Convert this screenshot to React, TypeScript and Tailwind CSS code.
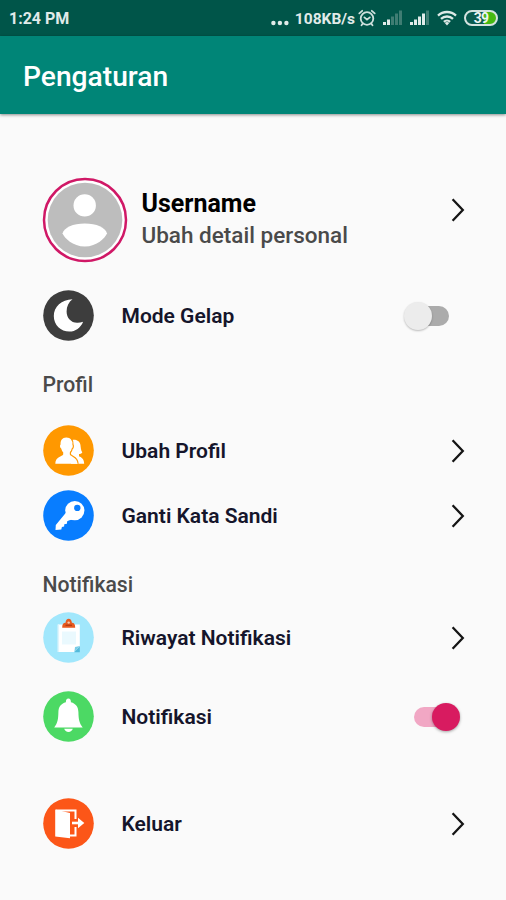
import { useState } from 'react';
import type { ReactNode } from 'react';

function Chevron() {
  return (
    <svg viewBox="0 0 16 26" className="w-4 h-[26px] shrink-0" fill="none" stroke="#151515" strokeWidth="2.3">
      <path d="M2.6 2.2 12.8 13 2.6 23.8" />
    </svg>
  );
}

function AlarmIcon() {
  return (
    <svg viewBox="0 0 18 18" className="w-[18px] h-[18px]" fill="none" stroke="#cfe0dd" strokeWidth="1.8" strokeLinecap="round">
      <circle cx="9" cy="9.5" r="6.3" />
      <path d="M6.4 8.4 9 10.6l2.8-2.2M1.3 4.4 4.2 1.8M16.7 4.4l-2.9-2.6M4.8 14.6l-1.3 1.6M13.2 14.6l1.3 1.6" />
    </svg>
  );
}

function SignalIcon({ level }: { level: number }) {
  return (
    <svg viewBox="0 0 20 16" className="w-5 h-4">
      {[3, 5.5, 8.5, 11.5, 14.5].map((h, i) => (
        <rect key={h} x={i * 4} y={15 - h} width="3" height={h} fill={i < level ? '#e0ebe9' : '#3f7d73'} />
      ))}
    </svg>
  );
}

function WifiIcon() {
  return (
    <svg viewBox="0 0 20 16" className="w-5 h-4" fill="none" stroke="#dce9e6" strokeWidth="2.3">
      <path d="M1 5.6a13 13 0 0 1 18 0M4 8.9a8.7 8.7 0 0 1 12 0M6.9 11.8a4.6 4.6 0 0 1 6.2 0" />
      <path d="M7.8 13 10 15.4 12.2 13a3.2 3.2 0 0 0-4.4 0z" fill="#dce9e6" stroke="none" />
    </svg>
  );
}

function StatusBar() {
  return (
    <div className="h-9 bg-[#005549] flex items-center pl-[9px] pr-2 text-[#e0ebe9] text-[15.5px] font-bold">
      <span className="pt-0.5 text-[16px]">1:24 PM</span>
      <div className="ml-auto flex items-center">
        <svg viewBox="0 0 18 6" className="w-[18px] h-1.5 mt-[9px]" fill="#e0ebe9">
          <circle cx="2.4" cy="3" r="2.2" />
          <circle cx="8.9" cy="3" r="2.2" />
          <circle cx="15.4" cy="3" r="2.2" />
        </svg>
        <span className="ml-[6px] pt-[3px]">108KB/s</span>
        <span className="ml-[3px]"><AlarmIcon /></span>
        <span className="ml-[7px]"><SignalIcon level={2} /></span>
        <span className="ml-[7px]"><SignalIcon level={4} /></span>
        <span className="ml-[7px]"><WifiIcon /></span>
        <span className="ml-[7px] w-[34px] h-4 rounded-full border-2 border-[#d5e3e0] bg-linear-to-r from-[#0a5b4f] from-60% to-[#46b912] to-60% flex items-center justify-center text-[14px] leading-none tracking-tighter text-[#eef5f3]">
          39
        </span>
      </div>
    </div>
  );
}

function Avatar() {
  return (
    <svg viewBox="0 0 86 86" className="w-[86px] h-[86px] shrink-0">
      <circle cx="43" cy="43" r="41" fill="#fff" stroke="#d01866" strokeWidth="2.5" />
      <circle cx="43" cy="43" r="37.3" fill="#bdbdbd" />
      <circle cx="42.7" cy="28.4" r="11.2" fill="#fff" />
      <path d="M20.5 56.5C22 50.5 31 46.5 42.8 46.5s20.7 4 22.2 10C63 61 55 69.5 42.8 69.5S22.5 61 20.5 56.5z" fill="#fff" />
    </svg>
  );
}

function MoonIcon() {
  return (
    <svg viewBox="0 0 51 51">
      <circle cx="25.5" cy="25.5" r="25.3" fill="#3d3d3d" />
      <path d="M29.5 9.3C18.5 9.6 10.8 17 10.8 26c0 9 7 15.6 15.6 15.6 6 0 11.3-3.7 13.7-9.8-2.2.8-4.2 1.1-6.1 1-6-.2-10.4-4.7-10.4-11.3 0-5.2 2.2-9.4 5.9-12.2z" fill="#fff" />
    </svg>
  );
}

function PeopleIcon() {
  return (
    <svg viewBox="0 0 51 51">
      <circle cx="25.5" cy="25.5" r="25.3" fill="#ff9800" />
      <path d="M28 15.6c1.7-1.7 8.5-1.5 9.4 4.2.4 2.6.4 5.5 1.9 7.6-.8 1.2-2.3 1.5-3.3 1.7v2.1c2.2 1 5 2.2 5.2 7.6H28z" fill="#fff" />
      <path d="M23.3 12.4c4.4 0 6.5 3 6.3 7 .8.2.9 3.2-.7 4-.5 2-1.3 3.3-1.9 3.9v2.2c.8 2.2 7.8 2 8 9.3H12.3c.1-7.2 7-7.1 7.9-9.3v-2.2c-.7-.6-1.5-1.9-2-3.9-1.5-.8-1.3-3.8-.6-4-.3-4 1.6-7 5.7-7z" fill="#fff" />
      <path d="M28.5 14.2c1.5 1.6 1.7 3.4 1.5 5.4.7 1 .4 3.5-.8 4.2-.4 1.8-1.2 3.1-1.8 3.8v1.7c1.5 2.4 7.6 2.3 7.7 9.5" fill="none" stroke="#ff9800" strokeWidth="1.2" />
    </svg>
  );
}

function KeyIcon() {
  return (
    <svg viewBox="0 0 51 51">
      <circle cx="25.5" cy="25.5" r="25.3" fill="#087dff" />
      <circle cx="31.8" cy="20.6" r="9.6" fill="#fff" />
      <path d="m23.5 22 7 7.2-4 1-2.3 1-.3 2.6-2.6.4-.2 2.3-2.2.5-.6 2.4-5.8.5.3-5z" fill="#fff" />
      <circle cx="34.3" cy="17.9" r="3.2" fill="#087dff" />
    </svg>
  );
}

function ClipboardIcon() {
  return (
    <svg viewBox="0 0 51 51">
      <circle cx="25.5" cy="25.5" r="25.3" fill="#a1e7fc" />
      <path d="M15 12.5h21.8V35l-5.5 5H15z" fill="#fff" />
      <path d="M14.5 12.5h1.6V40h-1.6z" fill="#dff5fc" />
      <path d="M19 19.5h14v13H19z" fill="#eaf9fe" />
      <path d="M36.8 34v6.2h-5.5z" fill="#54b9da" />
      <path d="M31.3 40.2 32 35l4.8-1z" fill="#79cde8" />
      <path d="M19.2 15.7c0-3.6 1-5 3.3-5 .3-2.5 1.4-3.9 3.2-3.9s2.9 1.4 3.2 3.9c2.3 0 3.3 1.4 3.3 5z" fill="#e65a20" />
      <circle cx="25.7" cy="10.6" r="1.2" fill="#f7c6a8" />
      <path d="M22.5 12.6H29V14h-6.5z" fill="#b63c12" />
    </svg>
  );
}

function BellIcon() {
  return (
    <svg viewBox="0 0 51 51">
      <circle cx="25.5" cy="25.5" r="25.3" fill="#4cd964" />
      <path d="M25.4 7.4c1.7 0 2.7 1.2 2.5 3.9 5.2 1.4 7.3 4.8 7.5 9.7.2 7.5.8 11 4.3 15.4H11.2c3.5-4.4 4-7.9 4.2-15.4.2-4.9 2.3-8.3 7.5-9.7-.2-2.7.8-3.9 2.5-3.9z" fill="#fff" />
      <path d="M21.2 37.7h8.6c-.6 2-2.2 3.2-4.3 3.2s-3.7-1.2-4.3-3.2z" fill="#fff" />
    </svg>
  );
}

function ExitIcon() {
  return (
    <svg viewBox="0 0 51 51">
      <circle cx="25.5" cy="25.5" r="25.3" fill="#fc5618" />
      <path d="M13 12.5h19.5V21M32.5 29v8.5H26" fill="none" stroke="#fff" strokeWidth="2" />
      <path d="M12.2 11.6 27 15v25.2l-14.8-1.8z" fill="#fff" />
      <path d="M29 25h7" stroke="#fff" strokeWidth="2.6" />
      <path d="m35 19.8 6.3 5.2-6.3 5.2z" fill="#fff" />
    </svg>
  );
}

function Switch({ on, onClick, label }: { on: boolean; onClick: () => void; label: string }) {
  return (
    <button
      role="switch"
      aria-checked={on}
      aria-label={label}
      onClick={onClick}
      className="w-[46px] h-7 flex items-center shrink-0"
    >
      <span
        className={
          on
            ? 'w-[35px] h-5 rounded-full bg-[#f1a7c4] flex items-center justify-end'
            : 'ml-[11px] w-[35px] h-5 rounded-full bg-[#ababab] flex items-center'
        }
      >
        <span
          className={
            on
              ? '-mr-[11px] w-7 h-7 rounded-full bg-[#d81b60] shadow-[0_1px_3px_rgba(0,0,0,0.35)] shrink-0'
              : '-ml-[10px] w-7 h-7 rounded-full bg-[#ececec] shadow-[0_1px_2px_rgba(0,0,0,0.25)] shrink-0'
          }
        />
      </span>
    </button>
  );
}

interface RowProps {
  icon: ReactNode;
  label: string;
  className?: string;
  children?: ReactNode;
}

function Row({ icon, label, className, children }: RowProps) {
  return (
    <div className={`h-[51px] flex items-center ${className ?? ''}`}>
      <span className="w-[51px] h-[51px] shrink-0">{icon}</span>
      <span className="ml-7 pt-0.5 flex-1 text-[21px] font-semibold text-[#15152b]">{label}</span>
      {children ?? <Chevron />}
    </div>
  );
}

export default function App() {
  const [dark, setDark] = useState(false);
  const [notify, setNotify] = useState(true);

  return (
    <div className="w-full h-[900px] overflow-hidden bg-[#fafafa] font-[Roboto,sans-serif]">
      <StatusBar />
      <header className="h-[78px] bg-[#008577] flex items-center pl-[23px] shadow-[0_1px_3px_rgba(0,0,0,0.45)]">
        <h1 className="text-[28.2px] font-medium text-white pt-1">Pengaturan</h1>
      </header>

      <main className="pl-[42.5px] pr-10 pt-[63px]">
        <div className="flex -ml-px h-[86px]">
          <Avatar />
          <div className="flex-1 ml-3.5 pt-[11px]">
            <div className="text-[25px] leading-8 font-bold text-black">Username</div>
            <div className="-mt-px text-[22.5px] leading-8 font-medium text-[#4a4a4a]">Ubah detail personal</div>
          </div>
          <div className="pt-5"><Chevron /></div>
        </div>

        <Row icon={<MoonIcon />} label="Mode Gelap" className="mt-[27px]">
          <div className="mr-[17px]">
            <Switch on={dark} onClick={() => setDark(!dark)} label="Mode Gelap" />
          </div>
        </Row>

        <h2 className="mt-[30px] h-7 leading-7 text-[21.2px] font-medium text-[#4a4a4a]">Profil</h2>
        <Row icon={<PeopleIcon />} label="Ubah Profil" className="mt-[26px]" />
        <Row icon={<KeyIcon />} label="Ganti Kata Sandi" className="mt-3.5" />

        <h2 className="mt-[30px] h-7 leading-7 text-[21.2px] font-medium text-[#4a4a4a]">Notifikasi</h2>
        <Row icon={<ClipboardIcon />} label="Riwayat Notifikasi" className="mt-[13px]" />
        <Row icon={<BellIcon />} label="Notifikasi" className="mt-7">
          <div className="mr-1.5">
            <Switch on={notify} onClick={() => setNotify(!notify)} label="Notifikasi" />
          </div>
        </Row>
        <Row icon={<ExitIcon />} label="Keluar" className="mt-14" />
      </main>
    </div>
  );
}
